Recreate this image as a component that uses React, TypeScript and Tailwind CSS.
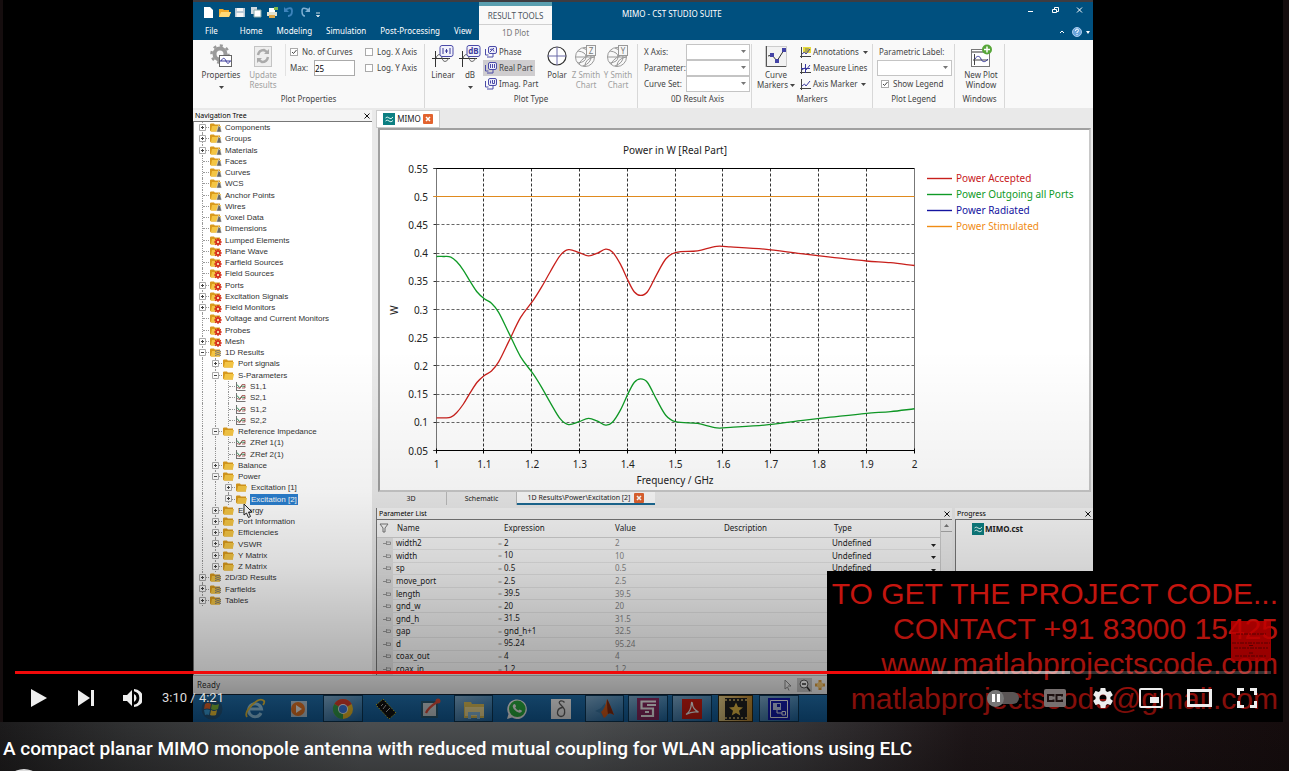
import React from 'react';

type Badge = 'cone' | 'gear' | 'stack' | 'none' | 'curve';

interface TreeNode {
  label: string;
  level: 0 | 1 | 2;
  badge: Badge;
  toggle?: '+' | '-';
  selected?: boolean;
}

const tree: TreeNode[] = [
  { label: 'Components', level: 0, badge: 'cone', toggle: '+' },
  { label: 'Groups', level: 0, badge: 'cone', toggle: '+' },
  { label: 'Materials', level: 0, badge: 'cone', toggle: '+' },
  { label: 'Faces', level: 0, badge: 'cone' },
  { label: 'Curves', level: 0, badge: 'cone' },
  { label: 'WCS', level: 0, badge: 'cone' },
  { label: 'Anchor Points', level: 0, badge: 'cone' },
  { label: 'Wires', level: 0, badge: 'cone' },
  { label: 'Voxel Data', level: 0, badge: 'cone' },
  { label: 'Dimensions', level: 0, badge: 'cone' },
  { label: 'Lumped Elements', level: 0, badge: 'gear' },
  { label: 'Plane Wave', level: 0, badge: 'gear' },
  { label: 'Farfield Sources', level: 0, badge: 'gear' },
  { label: 'Field Sources', level: 0, badge: 'gear' },
  { label: 'Ports', level: 0, badge: 'gear', toggle: '+' },
  { label: 'Excitation Signals', level: 0, badge: 'gear', toggle: '+' },
  { label: 'Field Monitors', level: 0, badge: 'gear', toggle: '+' },
  { label: 'Voltage and Current Monitors', level: 0, badge: 'gear' },
  { label: 'Probes', level: 0, badge: 'gear' },
  { label: 'Mesh', level: 0, badge: 'gear', toggle: '+' },
  { label: '1D Results', level: 0, badge: 'stack', toggle: '-' },
  { label: 'Port signals', level: 1, badge: 'none', toggle: '+' },
  { label: 'S-Parameters', level: 1, badge: 'none', toggle: '-' },
  { label: 'S1,1', level: 2, badge: 'curve' },
  { label: 'S2,1', level: 2, badge: 'curve' },
  { label: 'S1,2', level: 2, badge: 'curve' },
  { label: 'S2,2', level: 2, badge: 'curve' },
  { label: 'Reference Impedance', level: 1, badge: 'none', toggle: '-' },
  { label: 'ZRef 1(1)', level: 2, badge: 'curve' },
  { label: 'ZRef 2(1)', level: 2, badge: 'curve' },
  { label: 'Balance', level: 1, badge: 'none', toggle: '+' },
  { label: 'Power', level: 1, badge: 'none', toggle: '-' },
  { label: 'Excitation [1]', level: 2, badge: 'none', toggle: '+' },
  { label: 'Excitation [2]', level: 2, badge: 'none', toggle: '+', selected: true },
  { label: 'Energy', level: 1, badge: 'none', toggle: '+' },
  { label: 'Port Information', level: 1, badge: 'none', toggle: '+' },
  { label: 'Efficiencies', level: 1, badge: 'none', toggle: '+' },
  { label: 'VSWR', level: 1, badge: 'none', toggle: '+' },
  { label: 'Y Matrix', level: 1, badge: 'none', toggle: '+' },
  { label: 'Z Matrix', level: 1, badge: 'none', toggle: '+' },
  { label: '2D/3D Results', level: 0, badge: 'stack', toggle: '+' },
  { label: 'Farfields', level: 0, badge: 'stack', toggle: '+' },
  { label: 'Tables', level: 0, badge: 'stack', toggle: '+' },
];

const parameters = [
  { name: 'width2', expression: '2', value: '2', type: 'Undefined' },
  { name: 'width', expression: '10', value: '10', type: 'Undefined' },
  { name: 'sp', expression: '0.5', value: '0.5', type: 'Undefined' },
  { name: 'move_port', expression: '2.5', value: '2.5' },
  { name: 'length', expression: '39.5', value: '39.5' },
  { name: 'gnd_w', expression: '20', value: '20' },
  { name: 'gnd_h', expression: '31.5', value: '31.5' },
  { name: 'gap', expression: 'gnd_h+1', value: '32.5' },
  { name: 'd', expression: '95.24', value: '95.24' },
  { name: 'coax_out', expression: '4', value: '4' },
  { name: 'coax_in', expression: '1.2', value: '1.2' },
];

// accepted power as [GHz, W]
const accepted: [number, number][] = [
  [1, 0.108], [1.015, 0.108], [1.03, 0.109], [1.042, 0.117], [1.056, 0.132], [1.071, 0.153], [1.085, 0.171],
  [1.1, 0.183], [1.115, 0.191], [1.13, 0.207], [1.151, 0.243], [1.176, 0.286], [1.203, 0.317], [1.22, 0.34],
  [1.238, 0.367], [1.259, 0.396], [1.276, 0.406], [1.298, 0.401], [1.318, 0.395], [1.337, 0.4],
  [1.354, 0.407], [1.368, 0.402], [1.385, 0.38], [1.402, 0.349], [1.414, 0.331], [1.427, 0.325],
  [1.441, 0.331], [1.46, 0.361], [1.48, 0.39], [1.5, 0.401], [1.546, 0.404], [1.586, 0.412],
  [1.615, 0.411], [1.686, 0.407], [1.762, 0.399], [1.824, 0.393], [1.9, 0.386], [1.95, 0.383], [2, 0.378],
];
const outgoing = accepted.map(([f, w]): [number, number] => [f, 0.502 - w]);

const plot = { left: 56.5, top: 38.5, width: 478, height: 282 };
const px = (f: number) => plot.left + (f - 1) * plot.width;
const py = (w: number) => plot.top + ((0.55 - w) / 0.5) * plot.height;

function curvePath(data: [number, number][]) {
  const p = data.map(([f, w]) => [px(f), py(w)]);
  const slope = p.map((_, i) => {
    const a = p[Math.max(i - 1, 0)];
    const b = p[Math.min(i + 1, p.length - 1)];
    return (b[1] - a[1]) / (b[0] - a[0]);
  });
  let d = `M${p[0][0]} ${p[0][1]}`;
  for (let i = 0; i < p.length - 1; i++) {
    const [x0, y0] = p[i];
    const [x1, y1] = p[i + 1];
    const h = (x1 - x0) / 3;
    d += `C${x0 + h} ${y0 + h * slope[i]} ${x1 - h} ${y1 - h * slope[i + 1]} ${x1} ${y1}`;
  }
  return d;
}

const legend = [
  { label: 'Power Accepted', color: '#c8201c' },
  { label: 'Power Outgoing all Ports', color: '#0f9a26' },
  { label: 'Power Radiated', color: '#1414a0' },
  { label: 'Power Stimulated', color: '#f08c14' },
];

function PowerChart() {
  const xs = Array.from({ length: 11 }, (_, i) => 1 + i / 10);
  const ys = Array.from({ length: 11 }, (_, i) => 0.55 - i / 20);
  return (
    <svg viewBox="0 0 709 360" className="h-full w-full font-['Noto_Sans',sans-serif] text-[10px]" fill="none">
      <text x="295" y="24" textAnchor="middle" fill="#222">Power in W [Real Part]</text>
      {ys.slice(2, 10).map((w) => (
        <path key={w} d={`M${plot.left} ${Math.floor(py(w)) + 0.5}h${plot.width}`} stroke="#666" strokeDasharray="3 2" />
      ))}
      {xs.slice(1, 10).map((f) => (
        <path key={f} d={`M${Math.round(px(f)) - 0.5} ${plot.top}v${plot.height}`} stroke="#333" strokeDasharray="3 2" />
      ))}
      <path d={`M${plot.left} ${plot.top}v${plot.height}M${plot.left + plot.width} ${plot.top}v${plot.height}`} stroke="#777" />
      <path d={`M${plot.left - 3} ${plot.top}h${plot.width + 3}M${plot.left - 3} ${plot.top + plot.height}h${plot.width + 3}`} stroke="#000" />
      {ys.map((w) => (
        <g key={w}>
          <path d={`M${plot.left - 3} ${Math.floor(py(w)) + 0.5}h3`} stroke="#333" />
          <text x="48" y={py(w) + 4} textAnchor="end" fill="#222">{String(Number(w.toFixed(2)))}</text>
        </g>
      ))}
      {xs.map((f) => (
        <g key={f}>
          <path d={`M${Math.round(px(f)) - 0.5} ${plot.top + plot.height - 2}v5`} stroke="#000" />
          <text x={px(f)} y="338" textAnchor="middle" fill="#222">{String(Number(f.toFixed(1)))}</text>
        </g>
      ))}
      <text x="295" y="354" textAnchor="middle" fill="#222">Frequency / GHz</text>
      <text transform="translate(18 180) rotate(-90)" textAnchor="middle" fill="#222">W</text>
      <path d={`M${plot.left - 3} 66.5h${plot.width + 3}`} stroke="#e08a1e" />
      <path d={curvePath(accepted)} stroke="#c8201c" strokeWidth="1.3" />
      <path d={curvePath(outgoing)} stroke="#0f9a26" strokeWidth="1.3" />
      {legend.map((item, i) => (
        <g key={item.label}>
          <path d={`M547 ${48.5 + i * 16}h25`} stroke={item.color} strokeWidth="1.4" />
          <text x="576" y={52 + i * 16} fill={item.color}>{item.label}</text>
        </g>
      ))}
    </svg>
  );
}

function NodeIcon({ badge }: { badge: Badge }) {
  if (badge === 'curve') {
    return (
      <svg viewBox="0 0 12 11" className="h-[11px] w-3 shrink-0" fill="none">
        <path d="M1.500 1v9M1.500 9.500h9" stroke="#777" />
        <path d="M2 3.500 4.500 6.500 7 5l3 .5" stroke="#2d8a55" />
        <path d="M2 6.500 5 7.500 7 3.500h3V7H7" stroke="#a04545" strokeWidth=".8" />
      </svg>
    );
  }
  return (
    <svg viewBox="0 0 13 11" className="h-[11px] w-[13px] shrink-0" fill="none">
      <path d="M1 2.200 1.700 1.500H5l.8 1H11V9.500H2L1 8.500z" fill="#d99a1c" />
      <path d="M3 4h9l-1.200 5.500H1.800z" fill="#f4c544" />
      {badge === 'cone' && <path d="M9.500 3.500 7.500 10h5l-1-4.500z" fill="#666" stroke="#eee" strokeWidth=".5" />}
      {badge === 'gear' && (
        <>
          <path d="M9 3v8M5 7h8M6.200 4.200l5.600 5.600M11.800 4.200l-5.600 5.600" stroke="#d3271b" strokeWidth="1.200" />
          <circle cx="9" cy="7" r="2" fill="#f6d9a0" stroke="#d3271b" strokeWidth="1.600" />
        </>
      )}
      {badge === 'stack' && <path d="M6 4.500q3-2 6 0M6 6.500q3-2 6 0M6 8.500q3-2 6 0" stroke="#777" />}
    </svg>
  );
}

function TreeRow({ node }: { node: TreeNode }) {
  return (
    <li className="flex items-center">
      {Array.from({ length: node.level }, (_, i) => (
        <span key={i} className="ml-1.5 w-[7px] self-stretch border-l border-dotted border-[#999]" />
      ))}
      <span className="relative ml-1.5 flex w-[7px] items-center self-stretch border-l border-dotted border-[#999]">
        <span className="w-full border-t border-dotted border-[#999]" />
        {node.toggle && (
          <svg viewBox="0 0 7 7" className="absolute top-0.5 -left-1 size-[7px]" fill="#fff" stroke="#aaa">
            <path d="M.5.5h6v6h-6z" />
            <path d={node.toggle === '+' ? 'M2 3.500h3M3.500 2v3' : 'M2 3.500h3'} stroke="#444" />
          </svg>
        )}
      </span>
      <NodeIcon badge={node.badge} />
      <span className={node.selected ? 'ml-0.5 bg-[#2a7fd0] px-px text-white' : 'ml-[3px]'}>{node.label}</span>
    </li>
  );
}

function Caret({ className = '' }: { className?: string }) {
  return (
    <svg viewBox="0 0 5 3" className={`h-[3px] w-[5px] ${className}`} fill="currentColor">
      <path d="M0 0h5L2.500 3z" />
    </svg>
  );
}

function CheckBox({ label, checked = false }: { label: string; checked?: boolean }) {
  return (
    <label className="flex h-4 items-center gap-1">
      <span className="relative flex">
        <input type="checkbox" defaultChecked={checked} className="peer size-2 appearance-none border border-[#aaa] bg-white" />
        <svg viewBox="0 0 8 8" className="absolute inset-0 hidden size-2 peer-checked:block" fill="none" stroke="#444">
          <path d="M2 4l1.500 1.500L6.500 2" />
        </svg>
      </span>
      {label}
    </label>
  );
}

function Combo({ label, className }: { label: string; className: string }) {
  return (
    <span className={`relative flex ${className}`}>
      <select aria-label={label} className="h-4 w-full appearance-none border border-[#c4c4c4] bg-white" />
      <Caret className="pointer-events-none absolute top-1.5 right-1 text-[#777]" />
    </span>
  );
}

function Group({ title, className, children }: { title: string; className: string; children: React.ReactNode }) {
  return (
    <div className={`flex flex-col border-r border-[#d8d8d8] ${className}`}>
      <div className="flex h-12 items-start">{children}</div>
      <div className="text-center leading-[14px]">{title}</div>
    </div>
  );
}

function BigButton({ label, icon, className, muted, caret }: { label: string; icon: React.ReactNode; className: string; muted?: boolean; caret?: boolean }) {
  return (
    <button className={`flex flex-col items-center leading-[10px] ${muted ? 'text-[#a0a0a0]' : ''} ${className}`}>
      <span className="mb-0.5 flex size-6 items-center justify-center">{icon}</span>
      {label}
      {caret && <Caret className="mt-1.5" />}
    </button>
  );
}

function Waves({ tag }: { tag: string }) {
  return (
    <svg viewBox="0 0 24 24" className="size-6" fill="none">
      <path d="M4.500 7v16M1 14.500h18" stroke="#333" />
      <path d="M5 14c2-5 5-4 6 0s4 5 7 0" stroke="#555" />
      <rect x="9" y="1.500" width="13" height="11" rx="2" fill="#f2f2fb" stroke="#4b4ba8" />
      {tag === 'dB' ? (
        <text x="15.500" y="10" textAnchor="middle" fill="#3c3c9c" className="text-[8px] font-bold">dB</text>
      ) : (
        <path d="M12 4v6M19 4v6M14 7h3M15.500 5v4" stroke="#3c3c9c" />
      )}
    </svg>
  );
}

function Smith({ letter }: { letter: string }) {
  return (
    <svg viewBox="0 0 24 24" className="size-6" fill="none" stroke="#999">
      <circle cx="11" cy="13" r="9.500" />
      <path d="M2 13h18M4 7q8 1 8 6t-8 6M9 4q8 3 8 9t-8 9M11 22q0-7 9-9M5 20q4-8 15-10" />
      <rect x="12.500" y="1.500" width="9" height="10" fill="#f7f7f7" />
      <text x="17" y="9.500" textAnchor="middle" fill="#777" stroke="none" className="text-[8px]">{letter}</text>
    </svg>
  );
}

function PhaseIcon({ tag }: { tag: string }) {
  return (
    <svg viewBox="0 0 12 12" className="size-3" fill="none" stroke="#4b4ba8">
      <rect x="3.500" y=".5" width="8" height="7" rx="1.500" fill="#eeeefa" />
      <path d="M.5 3v6h3M2 11h6M8 8v3" />
      {tag === 'phase' && <path d="M5 6l4-4M5 3.500q3-2 4 2" />}
      {tag === 'real' && <path d="M5.500 2v4M7.500 2v4M9.500 2v4" />}
      {tag === 'imag' && <path d="M5.500 2.500v3M7.500 2v3.500h2V2" />}
    </svg>
  );
}

function MiniPlot({ tag }: { tag: string }) {
  return (
    <svg viewBox="0 0 11 11" className="size-[11px]" fill="none" stroke="#444">
      {tag === 'note' && <rect x="3" y="0" width="8" height="6" fill="#e8dc3c" stroke="none" />}
      <path d="M1.500 0v11M0 9.500h11" />
      <path d="M2 7l2.500-2L6 7l4-5" stroke="#3a3aa0" />
      {tag === 'measure' && <path d="M5.500 1v9M1 5.500h9" stroke="#3a3aa0" />}
      {tag === 'note' && <path d="M5 2h4M5 4h4" stroke="#776" />}
    </svg>
  );
}

function Ribbon() {
  return (
    <div className="flex h-[68px] bg-[#f9f9f9] pt-1 text-[8px] text-[#444]">
      <Group title="Plot Properties" className="w-[232px]">
        <BigButton
          label="Properties"
          className="w-14"
          caret
          icon={
            <svg viewBox="0 0 24 24" className="size-6" fill="none">
              <circle cx="11" cy="10" r="5.500" stroke="#9a9a9a" strokeWidth="4" />
              <circle cx="11" cy="10" r="8.500" stroke="#9a9a9a" strokeWidth="2.500" strokeDasharray="3 3.600" />
              <rect x="10.500" y="11.500" width="12" height="11" fill="#fff" stroke="#666" />
              <path d="M11 17h11M12 17c2-4 4-3 5 0s3 3 4 0" stroke="#3c3c9c" />
            </svg>
          }
        />
        <BigButton
          label="Update Results"
          className="mr-2 w-7"
          muted
          icon={
            <svg viewBox="0 0 24 24" className="size-6" fill="none">
              <rect x="3.500" y="2.500" width="17" height="20" fill="#eee" stroke="#c4c4c4" />
              <path d="M7 11q1-5 6-5l3 2M17 13q-1 5-6 5l-3-2" stroke="#aaa" strokeWidth="2.500" />
              <path d="M13 10h5V5zM11 14H6v5z" fill="#aaa" />
            </svg>
          }
        />
        <div className="w-[70px] border-l border-[#e2e2e2] pl-1">
          <CheckBox label="No. of Curves" checked />
          <label className="flex h-4 items-center justify-between">
            Max:
            <input type="text" defaultValue="25" className="h-4 w-[41px] border border-[#aaa] bg-white text-[8px] text-black" />
          </label>
        </div>
        <div className="ml-2.5">
          <CheckBox label="Log. X Axis" />
          <CheckBox label="Log. Y Axis" />
        </div>
      </Group>
      <Group title="Plot Type" className="w-[213px]">
        <BigButton label="Linear" className="ml-1 w-7" icon={<Waves tag="abs" />} />
        <BigButton label="dB" className="w-[26px]" icon={<Waves tag="dB" />} caret />
        <div className="w-[55px] leading-4">
          <button className="flex h-4 items-center gap-0.5 pl-0.5"><PhaseIcon tag="phase" />Phase</button>
          <button className="flex h-4 items-center gap-0.5 bg-[#cfcdcf] px-0.5 whitespace-nowrap"><PhaseIcon tag="real" />Real Part</button>
          <button className="flex h-4 items-center gap-0.5 pl-0.5 whitespace-nowrap"><PhaseIcon tag="imag" />Imag. Part</button>
        </div>
        <BigButton
          label="Polar"
          className="ml-1.5 w-[26px]"
          icon={
            <svg viewBox="0 0 24 24" className="size-6" fill="none">
              <circle cx="12" cy="12" r="9" fill="#fff" stroke="#333" strokeWidth="1.200" />
              <path d="M3 12h18M12 3v18" stroke="#6a6aa8" />
            </svg>
          }
        />
        <BigButton label="Z Smith Chart" className="w-8" muted icon={<Smith letter="Z" />} />
        <BigButton label="Y Smith Chart" className="w-8" muted icon={<Smith letter="Y" />} />
      </Group>
      <Group title="0D Result Axis" className="w-[114px] pl-1.5">
        <div className="w-[42px] leading-4 whitespace-nowrap">
          <div>X Axis:</div>
          <div>Parameter:</div>
          <div>Curve Set:</div>
        </div>
        <div>
          <Combo label="X Axis" className="w-16" />
          <Combo label="Parameter" className="w-16" />
          <Combo label="Curve Set" className="w-16" />
        </div>
      </Group>
      <Group title="Markers" className="w-[121px]">
        <button className="mr-1 ml-1 flex w-10 flex-col items-center leading-[10px]">
          <svg viewBox="0 0 24 24" className="mb-0.5 size-6" fill="none">
            <rect x="1.500" y="2.500" width="21" height="20" fill="#f2f2f2" stroke="#ccc" />
            <path d="M2.500 2v20.500H22" stroke="#555" />
            <path d="M4 12l4-1 5 6 7-11" stroke="#333" />
            <path d="M6 9h4v4H6zM11 15h4v4h-4zM18 4h4v4h-4z" fill="#4343a5" />
          </svg>
          <span>Curve</span>
          <span className="flex items-center gap-0.5">Markers<Caret /></span>
        </button>
        <div className="leading-4 whitespace-nowrap">
          <button className="flex h-4 items-center gap-0.5"><MiniPlot tag="note" />Annotations<Caret className="ml-0.5" /></button>
          <button className="flex h-4 items-center gap-0.5"><MiniPlot tag="measure" />Measure Lines</button>
          <button className="flex h-4 items-center gap-0.5"><MiniPlot tag="axis" />Axis Marker<Caret className="ml-0.5" /></button>
        </div>
      </Group>
      <Group title="Plot Legend" className="w-[82px]">
        <div className="ml-1 leading-4">
          <div className="pl-0.5">Parametric Label:</div>
          <Combo label="Parametric Label" className="w-[75px]" />
          <div className="pl-1"><CheckBox label="Show Legend" checked /></div>
        </div>
      </Group>
      <Group title="Windows" className="w-[50px]">
        <BigButton
          label="New Plot Window"
          className="ml-1.5 w-10"
          icon={
            <svg viewBox="0 0 24 24" className="size-6" fill="none">
              <rect x="2.500" y="5.500" width="18" height="17" fill="#fff" stroke="#777" />
              <path d="M3 8h17" stroke="#999" strokeWidth="2" />
              <path d="M5.500 10v11M4 16h15" stroke="#444" />
              <path d="M6 15c2-4 5-3 6 0s4 4 7 0" stroke="#3c3c9c" />
              <circle cx="18" cy="5.500" r="5" fill="#57a639" />
              <path d="M18 2.500v6M15 5.500h6" stroke="#fff" strokeWidth="1.500" />
            </svg>
          }
        />
      </Group>
    </div>
  );
}

function QuickIcons() {
  return (
    <svg viewBox="0 0 120 12" className="h-3 w-[120px]" fill="none">
      <path d="M2 1h6l3 3v8H2z" fill="#fff" />
      <path d="M17 3h4l1 1h5v2l2 0-2 5H17z" fill="#f2ab2b" />
      <path d="M19 6h10l-2 5H17z" fill="#ffd978" />
      <path d="M33 2h10v9h-10z" fill="#b9cbd8" />
      <path d="M35 2h6v3h-6zM34.500 7h7v4h-7z" fill="#f6f6f6" />
      <path d="M49 1h6v7h-6z" fill="#cdd8e0" />
      <path d="M52 4h7v7h-7z" fill="#fff" stroke="#8aa" />
      <path d="M65 6h10v4H65z" fill="#e2e2d0" />
      <path d="M67 2h6v4h-6z" fill="#fff" />
      <path d="M67 9h6v3h-6z" fill="#e0a848" />
      <path d="M72 1h4v3h-4z" fill="#7ab648" />
      <path d="M83 4q7-4 7 1t-4 5" stroke="#3d83bb" strokeWidth="1.800" />
      <path d="M82 1v5h5z" fill="#3d83bb" />
      <path d="M107 4q-7-4-7 1t3 5" stroke="#7fb0d4" strokeWidth="1.500" />
      <path d="M108 1v5h-5z" fill="#7fb0d4" />
      <path d="M114 7h4M114.500 9.500h3l-1.500 1.500z" stroke="#fff" strokeWidth=".8" />
    </svg>
  );
}

function TitleBar() {
  return (
    <header className="flex h-[38px] bg-[#00507f] text-[8px] text-white">
      <div className="w-[286px]">
        <div className="flex h-5 items-center pl-[9px]"><QuickIcons /></div>
        <nav className="flex h-[18px] items-center pl-3 leading-4">
          <button className="mr-[22px]">File</button>
          <button className="mr-3.5">Home</button>
          <button className="mr-3.5">Modeling</button>
          <button className="mr-3.5">Simulation</button>
          <button className="mr-3.5">Post-Processing</button>
          <button>View</button>
        </nav>
      </div>
      <div className="w-[73px] border-t-4 border-[#5a9fb0] bg-[#f9f9f9] text-center text-[#4c5560]">
        <div className="border-b border-[#d0d0d0] pt-0.5 leading-4">RESULT TOOLS</div>
        <button className="leading-4 text-[#777]">1D Plot</button>
      </div>
      <div className="flex flex-1 justify-between">
        <h1 className="ml-[70px] leading-6">MIMO - CST STUDIO SUITE</h1>
        <svg viewBox="0 0 70 38" className="h-[38px] w-[70px]" fill="none" stroke="#fff">
          <path d="M5 9.500h5M29.500 7.500h4v3h-4zM31.500 7V5.500h4v4H34M54 5.500l5 5M59 5.500l-5 5" />
          <path d="M37 31l2-2 2 2" />
          <circle cx="54" cy="30" r="4.500" fill="#6aa5dc" stroke="#a9cbee" />
          <path d="M52.500 29q0-2 1.500-2t1.500 1.500-1.500 1.500v1M54 32v1" />
          <path d="M63 29h4l-2 3z" fill="#fff" stroke="none" />
        </svg>
      </div>
    </header>
  );
}

function CstMark() {
  return (
    <svg viewBox="0 0 12 12" className="size-3" fill="none" stroke="#d8f4f2">
      <path d="M0 0h12v12H0z" fill="#0c7f82" stroke="none" />
      <path d="M2.500 5q1.500-2 3.500 0t4-1M2.500 8q1.500-2 3.500 0t4-.5" />
    </svg>
  );
}

function CloseTab() {
  return (
    <svg viewBox="0 0 10 10" className="size-2.5" fill="none">
      <rect width="10" height="10" rx="1" fill="#e2632f" />
      <path d="M3 3l4 4M7 3l-4 4" stroke="#fff" strokeWidth="1.500" />
    </svg>
  );
}

function PaneHeader({ title }: { title: string }) {
  return (
    <div className="flex h-[11px] items-center justify-between bg-[#f4f4f4] px-0.5 text-[7px] leading-[11px] text-black">
      <span>{title}</span>
      <button aria-label={`Close ${title}`}>
        <svg viewBox="0 0 6 6" className="size-1.5" stroke="#111"><path d="M.5.5l5 5M5.500.5l-5 5" /></svg>
      </button>
    </div>
  );
}

function ParameterList() {
  return (
    <section className="flex w-[576px] flex-col border-l border-[#777]">
      <PaneHeader title="Parameter List" />
      <div className="flex min-h-0 flex-1 overflow-hidden border-t border-[#777] bg-[#f8f8f8]">
        <table className="h-[156px] w-[563px] table-fixed border-collapse text-left text-[8px] leading-[10px] text-[#222]">
          <thead>
            <tr className="h-[17px] border-b border-[#d0d0d0]">
              <th className="w-4">
                <svg viewBox="0 0 10 10" className="ml-0.5 size-2.5" fill="none" stroke="#777"><path d="M1 1h8L6 5v4H4V5z" /></svg>
              </th>
              <th className="w-[105px] pl-1 font-normal">Name</th>
              <th className="w-[115px] pl-1.5 font-normal">Expression</th>
              <th className="w-[109px] pl-0.5 font-normal">Value</th>
              <th className="w-[108px] pl-0.5 font-normal">Description</th>
              <th className="pl-1 font-normal">Type</th>
            </tr>
          </thead>
          <tbody>
            {parameters.map((row) => (
              <tr key={row.name} className="border-b border-[#e6e6e6]">
                <td className="border-0 bg-[#e4e4e4] p-0">
                  <svg viewBox="0 0 8 6" className="ml-1.5 h-1.5 w-2" fill="none" stroke="#999"><path d="M0 3.500h3M3.500 1v4M4 2h3.500v2.500H4" /></svg>
                </td>
                <td className="p-0 pl-[3px]">{row.name}</td>
                <td className="p-0"><span className="mr-0.5 text-[7px] text-[#999]">=</span>{row.expression}</td>
                <td className="p-0 pl-0.5 text-[#888]">{row.value}</td>
                <td className="p-0" />
                <td className="p-0 pl-0.5">
                  {row.type && <div className="flex items-center justify-between pr-1">{row.type}<Caret className="mt-1" /></div>}
                </td>
              </tr>
            ))}
          </tbody>
        </table>
        <div className="flex w-3 justify-center border-l border-[#ccc] bg-[#ededed]">
          <div className="flex h-3 w-full items-center justify-center border-b border-[#aaa]"><Caret className="rotate-180 text-[#777]" /></div>
        </div>
      </div>
    </section>
  );
}

function TaskIcon({ name }: { name: string }) {
  const cls = 'size-[22px]';
  switch (name) {
    case 'start':
      return (
        <svg viewBox="0 0 22 22" className={cls}>
          <circle cx="11" cy="11" r="10.500" fill="#245a84" />
          <path d="M4 6q3-2 6 0l-1 5q-3-1-6 0z" fill="#f06a2c" />
          <path d="M11 6q3 2 7 0l-1 5q-4 2-7 0z" fill="#8cc63e" />
          <path d="M3 12q3-1 6 0l-1 5q-2-1-4 0z" fill="#3fa9e8" />
          <path d="M10 12q3 2 6 0l-1 5q-3 1-6 0z" fill="#ffd23c" />
        </svg>
      );
    case 'ie':
      return (
        <svg viewBox="0 0 22 22" className={cls} fill="none">
          <path d="M17 15a6.500 6.500 0 1 1 .5-4H6" stroke="#9cd4f4" strokeWidth="3" />
          <path d="M3 19Q0 15 8 7t12-4q1 1-1 4" stroke="#f0c83c" strokeWidth="1.800" />
        </svg>
      );
    case 'media':
      return (
        <svg viewBox="0 0 22 22" className={cls}>
          <rect x="3" y="3" width="16" height="16" fill="#bfd4e4" />
          <circle cx="10" cy="11" r="7" fill="#f07c28" />
          <path d="M8 7v8l6-4z" fill="#fff" />
        </svg>
      );
    case 'chrome':
      return (
        <svg viewBox="0 0 22 22" className={cls}>
          <circle cx="11" cy="11" r="10" fill="#f7c52b" />
          <path d="M11 11 2.300 6A10 10 0 0 1 19.700 6z" fill="#e5402f" />
          <path d="M11 11 2.300 6A10 10 0 0 0 11 21z" fill="#36a852" />
          <circle cx="11" cy="11" r="5" fill="#fff" />
          <circle cx="11" cy="11" r="4" fill="#3f82ef" />
        </svg>
      );
    case 'chip':
      return (
        <svg viewBox="0 0 22 22" className={cls}>
          <path d="M1 7 8 1l13 14-7 6z" fill="#111" stroke="#d8d02c" strokeDasharray="1.500 1.500" />
          <path d="M6 8l2-2M8 11l3-4M11 14l4-4" stroke="#bbb" />
        </svg>
      );
    case 'edit':
      return (
        <svg viewBox="0 0 22 22" className={cls} fill="none">
          <rect x="3" y="4" width="15" height="15" fill="#d4dcdf" stroke="#2c5f78" strokeWidth="2" />
          <path d="M7 15q2-5 11-11" stroke="#e8503c" strokeWidth="2.200" />
          <circle cx="19" cy="3" r="2.500" fill="#e8503c" />
        </svg>
      );
    case 'files':
      return (
        <svg viewBox="0 0 22 22" className={cls}>
          <path d="M1 4h7l1 2h12v14H1z" fill="#e8c95c" />
          <path d="M2 9h19v9H2z" fill="#fbe79c" />
          <path d="M5 14h12v7h-3v-4H8v4H5z" fill="#8ec4e8" />
        </svg>
      );
    case 'whatsapp':
      return (
        <svg viewBox="0 0 22 22" className={cls}>
          <path d="M1 21l1.500-5A9.800 9.800 0 1 1 6 19.600z" fill="#fff" />
          <circle cx="11.300" cy="10.800" r="8.300" fill="#2cb742" />
          <path d="M7.500 6.500q1-1 1.800 0l.8 1.800-.9 1.300q1 2 3.200 3l1.300-1.200 2 1q.6.5-.3 1.700-2 1.500-5-.5-3.500-2.500-3.700-5 0-1.300.8-2.100z" fill="#fff" />
        </svg>
      );
    case 'delta':
      return (
        <svg viewBox="0 0 22 22" className={cls} fill="none">
          <rect x="1" y="1" width="20" height="20" fill="#fff" />
          <path d="M14.500 4.500q-1.500-2-4-1.500-2.500 1 0 3.500t4 5q1 7-3.500 7-4-.5-3.500-4.500.5-4 5-4.500" stroke="#666" strokeWidth="1.300" />
        </svg>
      );
    case 'matlab':
      return (
        <svg viewBox="0 0 22 22" className={cls}>
          <path d="M1 13l6-3 4-5 2 12-4 3-3-5z" fill="#3f7fb0" />
          <path d="M13 1q2 3 7 16-4-3-6-1-2 3-4 4l-3-6q4-3 6-13z" fill="#e0601e" />
          <path d="M13 1q2 3 7 16-4-3-6-1-1-5-1-15z" fill="#8a2c12" />
        </svg>
      );
    case 'cst-red':
      return (
        <svg viewBox="0 0 22 22" className={cls} fill="none">
          <rect width="22" height="22" fill="#8f2a66" />
          <path d="M19 3.500H4.500v7H16V18H4M8 14h4M19 7h-9" stroke="#fff" strokeWidth="2.200" />
        </svg>
      );
    case 'pdf':
      return (
        <svg viewBox="0 0 22 22" className={cls} fill="none">
          <rect x="1" y="1" width="20" height="20" fill="#d61d12" />
          <path d="M5 16.500q5-3 5.500-11.500 0-1 .8 0 .2 6 6.200 9-7-1-12.500 2.500z" stroke="#fff" strokeWidth="1.300" />
        </svg>
      );
    case 'star':
      return (
        <svg viewBox="0 0 22 22" className={cls}>
          <rect width="22" height="22" fill="#222" />
          <path d="M0 2h22M0 20h22" stroke="#e0c070" strokeWidth="1.500" strokeDasharray="2 2" />
          <path d="M11 4.500l2 4.500 5 .5-4 3.200 1.300 4.800L11 15l-4.300 2.500L8 12.700 4 9.500 9 9z" fill="#f6c84c" />
        </svg>
      );
    default:
      return (
        <svg viewBox="0 0 22 22" className={cls} fill="none">
          <rect x="0" y="0" width="22" height="22" fill="#141cb8" />
          <path d="M2.500 2.500h17v17h-17z" stroke="#fff" />
          <path d="M5 5h8v7H5z" fill="#c9d4f8" />
          <path d="M9 6h3v3H9z" fill="#141cb8" />
          <path d="M14 13.500h3.500V17H14zM9 12v3h5" stroke="#fff" />
        </svg>
      );
  }
}

const tasks = [
  { name: 'start' },
  { name: 'ie' },
  { name: 'media' },
  { name: 'chrome', open: true },
  { name: 'chip' },
  { name: 'edit' },
  { name: 'files', open: true },
  { name: 'whatsapp' },
  { name: 'delta' },
  { name: 'matlab', open: true },
  { name: 'cst-red', open: true },
  { name: 'pdf', open: true },
  { name: 'star', active: true },
  { name: 'cst-blue', open: true },
];

function Taskbar() {
  return (
    <div className="h-7 border-t border-[#123] bg-linear-to-b from-[#2273b0] to-[#1568ac]">
      <div className="-ml-[3px] grid h-full w-[611px] grid-cols-14">
        {tasks.map((task) => (
          <button
            key={task.name}
            aria-label={task.name}
            className={
              task.active
                ? 'mx-1 flex items-center justify-center border border-[#3a2c10] bg-linear-to-r from-[#f0d890] to-[#c89030]'
                : task.open
                  ? 'mx-0.5 flex items-center justify-center border border-[#0c3a5c] bg-linear-to-br from-white/45 to-white/5'
                  : 'flex items-center justify-center'
            }
          >
            <TaskIcon name={task.name} />
          </button>
        ))}
      </div>
    </div>
  );
}

function StudioWindow() {
  return (
    <div className="flex flex-col border-t-2 border-[#3e3c41] bg-[#e9e9e9] font-['Noto_Sans',sans-serif]">
      <TitleBar />
      <Ribbon />
      <div className="flex h-[567px]">
        <aside className="relative flex w-[179px] flex-col pt-0.5">
          <PaneHeader title="Navigation Tree" />
          <div className="flex-1 border-t border-l border-[#777] bg-white pl-0.5">
            <ul className="grid h-[484px] auto-rows-fr overflow-hidden font-['Liberation_Sans',sans-serif] text-[8px] leading-[11px] whitespace-nowrap text-[#333]">
              {tree.map((node) => (
                <TreeRow key={node.label} node={node} />
              ))}
            </ul>
          </div>
          <svg viewBox="0 0 10 16" className="absolute top-[395px] left-[50px] h-4 w-2.5" fill="#fff" stroke="#222">
            <path d="M1 1v11l2.500-2 2 4.500 2-1L5.500 9H9z" />
          </svg>
        </aside>
        <div className="ml-1 flex min-w-0 flex-1 flex-col">
          <div className="flex h-5 items-end">
            <button className="flex h-[18px] w-16 items-center justify-center gap-0.5 border border-[#ccc] bg-white text-[8px] text-[#222]">
              <CstMark />MIMO<CloseTab />
            </button>
          </div>
          <div className="mr-0.5 ml-0.5 h-[364px] border-2 border-r-[#c8c8c8] border-b-[#c8c8c8] border-t-[#a0a0a0] border-l-[#a0a0a0] bg-white"><PowerChart /></div>
          <div className="flex h-[13px] text-[7px] leading-3 text-[#222]">
            <button className="w-[71px] border-r border-[#bbb]">3D</button>
            <button className="w-[70px] border-r border-[#bbb]">Schematic</button>
            <button className="flex w-[138px] items-center justify-center gap-1 border-b-2 border-[#1c6a94] bg-[#fafafa]">
              {'1D Results\\Power\\Excitation [2]'}<CloseTab />
            </button>
          </div>
          <div className="flex min-h-0 flex-1 pt-[3px]">
            <ParameterList />
            <section className="ml-[3px] flex flex-1 flex-col">
              <PaneHeader title="Progress" />
              <div className="flex flex-1 items-start gap-px border-t border-l border-[#777] bg-[#f8f8f8] pt-[3px] pl-4 text-[8px] leading-3 font-bold text-[#222]">
                <CstMark />MIMO.cst
              </div>
            </section>
          </div>
        </div>
      </div>
      <footer className="flex h-[19px] items-center justify-between border-t border-[#bbb] bg-[#f0f0f0] pl-1 text-[8px] text-[#333]">
        Ready
        <svg viewBox="0 0 50 14" className="mr-[266px] h-3.5 w-[50px]" fill="none">
          <path d="M8 2v9l2.500-2 1.500 3.500M8 2l6 6h-3" stroke="#888" />
          <path d="M20 0h15v14H20z" fill="#c4c4c4" />
          <circle cx="27" cy="6" r="4" fill="#fff" stroke="#555" />
          <path d="M25 6h4M30 9l3 4" stroke="#333" strokeWidth="1.500" />
          <path d="M43 2v10M38 7h10" stroke="#dc9c3c" strokeWidth="3" />
          <circle cx="43" cy="7" r="3" fill="#f2c878" />
        </svg>
      </footer>
      <Taskbar />
    </div>
  );
}

function PlayerControls() {
  const button = 'flex h-12 w-12 items-center justify-center';
  return (
    <div className="absolute inset-x-3 bottom-0 text-[#eee]">
      <div className="relative h-[3px] bg-white/20">
        <div className="h-full w-[84%] bg-white/50" />
        <div className="absolute inset-y-0 left-0 w-[73%] bg-[#f00a0a]" />
        <input type="range" aria-label="Seek" max={261} defaultValue={190} className="absolute inset-0 h-full w-full opacity-0" />
      </div>
      <div className="flex h-12 items-center">
        <button aria-label="Play" className="flex h-12 w-[47px] items-center justify-center">
          <svg viewBox="0 0 16 18" className="h-[18px] w-4" fill="currentColor"><path d="M0 0v18l16-9z" /></svg>
        </button>
        <button aria-label="Next" className="flex h-12 w-[47px] items-center justify-center">
          <svg viewBox="0 0 16 16" className="size-4" fill="currentColor"><path d="M0 0v16l12-8zM13 0h3v16h-3z" /></svg>
        </button>
        <button aria-label="Mute" className="flex h-12 w-[47px] items-center justify-center">
          <svg viewBox="0 0 19 18" className="h-[18px] w-[19px]" fill="currentColor">
            <path d="M0 6v6h4l5 5V1L4 6zM11 5v8q2.500-1.200 2.500-4T11 5zM11 0v2.200A7 7 0 0 1 11 15.800V18A9 9 0 0 0 11 0z" />
          </svg>
        </button>
        <span className="ml-1.5 flex-1 text-[13px] text-[#ddd]">3:10 / 4:21</span>
        <button role="switch" aria-checked="false" aria-label="Autoplay" className="mr-1 flex h-12 w-12 items-center justify-center">
          <span className="relative flex h-3 w-8 items-center rounded-full bg-[#5a5555]">
            <span className="flex size-[17px] items-center justify-center rounded-full bg-[#777]">
              <svg viewBox="0 0 8 8" className="size-2" fill="#fff"><path d="M0 0h3v8H0zM5 0h3v8H5z" /></svg>
            </span>
          </span>
        </button>
        <button aria-label="Subtitles" className={button}>
          <svg viewBox="0 0 22 18" className="h-[18px] w-[22px]" fill="none">
            <rect width="22" height="18" rx="2" fill="#777070" />
            <path d="M9.500 7.500V6H4v6h5.500v-1.500M18 7.500V6h-5.500v6H18v-1.500" stroke="#1c1010" strokeWidth="2" />
          </svg>
        </button>
        <button aria-label="Settings" className={button}>
          <svg viewBox="2 2 20 20" className="size-5" fill="currentColor">
            <path d="M19.400 13c.04-.3.060-.7.060-1s-.02-.7-.06-1l2.100-1.600c.2-.15.240-.42.120-.64l-2-3.460c-.12-.22-.39-.3-.6-.22l-2.500 1c-.5-.4-1.100-.73-1.700-.98l-.38-2.650A.49.49 0 0 0 14 2h-4c-.25 0-.46.180-.49.420l-.38 2.650c-.6.250-1.200.6-1.700.98l-2.500-1c-.23-.1-.5 0-.6.220l-2 3.460c-.13.220-.07.5.120.640L4.600 11c-.04.3-.07.7-.07 1s.03.7.07 1l-2.100 1.600c-.2.150-.25.420-.12.640l2 3.460c.12.220.39.300.6.220l2.500-1c.5.4 1.100.73 1.700.98l.38 2.650c.03.240.240.420.49.420h4c.25 0 .46-.18.49-.42l.38-2.650c.6-.25 1.200-.6 1.700-.98l2.500 1c.23.100.5 0 .6-.22l2-3.460c.12-.22.070-.5-.12-.64zM12 15.500a3.500 3.500 0 1 1 0-7 3.500 3.500 0 0 1 0 7z" />
          </svg>
        </button>
        <button aria-label="Miniplayer" className={button}>
          <svg viewBox="0 0 24 20" className="h-5 w-6" fill="none" stroke="currentColor" strokeWidth="2">
            <rect x="1" y="1" width="22" height="18" rx="1" />
            <path d="M11 9h9v6h-9z" fill="currentColor" stroke="none" />
          </svg>
        </button>
        <button aria-label="Theater mode" className={button}>
          <svg viewBox="0 0 25 18" className="h-[18px] w-[25px]" fill="none" stroke="currentColor" strokeWidth="3"><path d="M1.500 1.500h22v15h-22z" /></svg>
        </button>
        <button aria-label="Full screen" className={button}>
          <svg viewBox="0 0 20 20" className="size-5" fill="none" stroke="currentColor" strokeWidth="3">
            <path d="M1.500 7V1.500H7M13 1.500h5.500V7M18.500 13v5.500H13M7 18.500H1.500V13" />
          </svg>
        </button>
      </div>
    </div>
  );
}

export default function App() {
  return (
    <main className="h-screen overflow-hidden bg-[#150d0e] font-['Roboto',sans-serif]">
      <section className="relative mr-1.5 ml-[3px] overflow-hidden bg-black px-[190px]">
        <StudioWindow />

        {/* Contact card burned into the video */}
        <div className="absolute right-0 bottom-0 h-[151px] w-[456px] bg-black pt-[5px] pr-[5px] text-right font-['Liberation_Sans',sans-serif] text-[30px] leading-[35px] whitespace-nowrap text-[#f01a12]">
          <p>TO GET THE PROJECT CODE...</p>
          <p>CONTACT +91 83000 15425</p>
          <p>www.matlabprojectscode.com</p>
          <p>matlabprojectscode@gmail.com</p>
        </div>
        <svg viewBox="0 0 40 40" className="absolute right-3 bottom-[61px] size-10" fill="none">
          <path d="M0 0h40v40H0z" fill="#ff0000" fillOpacity=".85" />
          <path d="M5 13h30M1 22h38M3 27h34M18 24.500h4M4 35h32M18 32h4" stroke="#700" strokeDasharray="4 1 2 1" />
        </svg>

        <div className="pointer-events-none absolute inset-x-0 bottom-0 h-[372px] bg-[linear-gradient(to_bottom,transparent,rgba(0,0,0,0.06)_38%,rgba(0,0,0,0.14)_58%,rgba(0,0,0,0.33)_87%,rgba(0,0,0,0.52))]" />
        <PlayerControls />
      </section>

      <section className="bg-[linear-gradient(to_bottom,transparent,rgba(10,8,8,0.5)),linear-gradient(to_right,#1c1b1c,#303132_10%,#4b4e50_28%,#4b4e50_45%,#353436_62%,#1e1618_75%,#150c0d)] pt-[13px]">
        <h2 className="pl-[3px] text-[19px] leading-7 font-medium whitespace-nowrap text-white">
          A compact planar MIMO monopole antenna with reduced mutual coupling for WLAN applications using ELC
        </h2>
        <div className="mt-1.5 ml-1 size-10 rounded-full bg-[#ddd]" />
      </section>
    </main>
  );
}
